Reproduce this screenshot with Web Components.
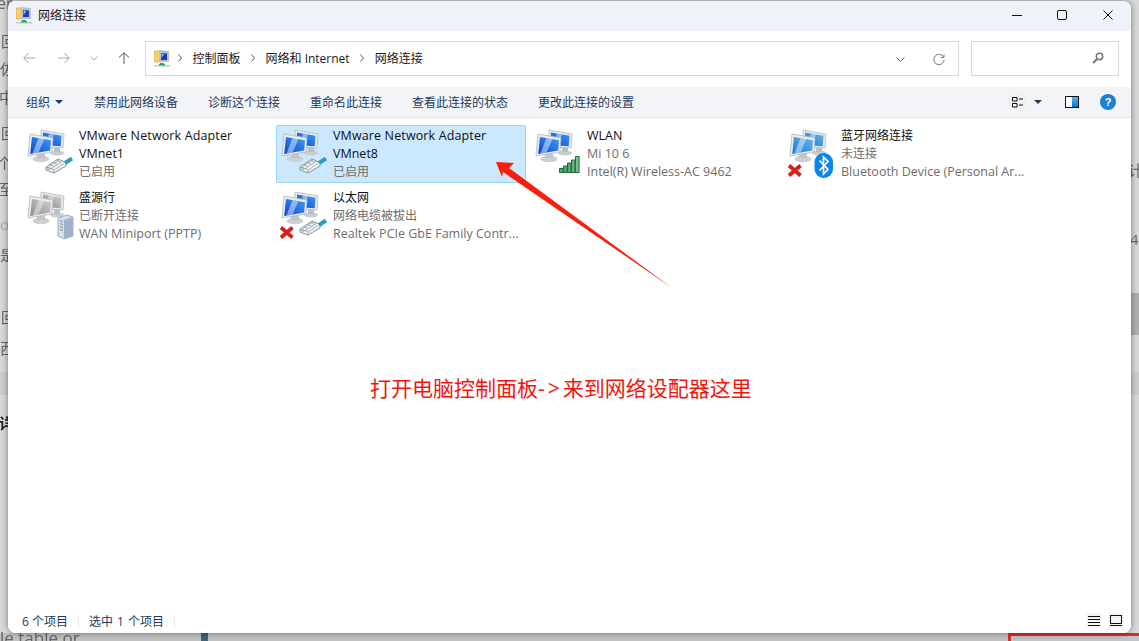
<!DOCTYPE html>
<html lang="zh">
<head>
<meta charset="utf-8">
<title>网络连接</title>
<style>
    html, body { margin: 0; height: 641px; overflow: hidden; }
    body {
        background: #d4d4d4;
        font-family: "Open Sans", "Noto Sans CJK SC", sans-serif;
        font-size: 12px;
    }
</style>
</head>
<body>
<desktop-bg>
    <span style="left:-3px;top:-8px;font-size:16px">er</span>
    <span style="left:1px;top:30px">回</span>
    <span style="left:0;top:58px">佐</span>
    <span style="left:-1px;top:86px">中</span>
    <span style="left:1px;top:122px">回</span>
    <span style="left:-3px;top:152px">个</span>
    <span style="left:-1px;top:178px">至</span>
    <span style="left:0;top:214px;color:#aaa">ol</span>
    <span style="left:0;top:244px">是</span>
    <span style="left:1px;top:306px">回</span>
    <span style="left:0;top:337px">西</span>
    <span style="left:-1px;top:412px;font-weight:700;color:#222">详</span>
    <span style="left:1128px;top:159px">计</span>
    <span style="left:1130px;top:229px">4</span>
    <span style="left:0;top:631px;font-size:17px;line-height:14px">le table or</span>
</desktop-bg>
<net-window>
    <title-bar slot="title">网络连接</title-bar>
    <nav-bar slot="nav"></nav-bar>
    <tool-bar slot="tools">
        <span>禁用此网络设备</span>
        <span>诊断这个连接</span>
        <span>重命名此连接</span>
        <span>查看此连接的状态</span>
        <span>更改此连接的设置</span>
    </tool-bar>
    <item-list slot="list">
        <net-item icon="blue" badge="plug" dark>
            <span slot="name" class="latin wide">VMware Network Adapter</span>
            <span slot="second" class="latin">VMnet1</span>
            <span slot="third">已启用</span>
        </net-item>
        <net-item icon="blue" badge="plug" dark selected>
            <span slot="name" class="latin wide">VMware Network Adapter</span>
            <span slot="second" class="latin">VMnet8</span>
            <span slot="third">已启用</span>
        </net-item>
        <net-item icon="blue" badge="wifi">
            <span slot="name" class="latin">WLAN</span>
            <span slot="second" class="latin">Mi 10 6</span>
            <span slot="third" class="latin">Intel(R) Wireless-AC 9462</span>
        </net-item>
        <net-item icon="pale" badge="bluetooth" cross>
            <span slot="name">蓝牙网络连接</span>
            <span slot="second">未连接</span>
            <span slot="third" class="latin">Bluetooth Device (Personal Ar...</span>
        </net-item>
        <net-item icon="grey" badge="server">
            <span slot="name">盛源行</span>
            <span slot="second">已断开连接</span>
            <span slot="third" class="latin">WAN Miniport (PPTP)</span>
        </net-item>
        <net-item icon="blue" badge="plug" cross>
            <span slot="name">以太网</span>
            <span slot="second">网络电缆被拔出</span>
            <span slot="third" class="latin">Realtek PCIe GbE Family Contr...</span>
        </net-item>
    </item-list>
    <status-bar slot="status"></status-bar>
    <red-note slot="note">打开电脑控制面板<span style="letter-spacing:3px">-&gt;</span>来到网络设配器这里</red-note>
</net-window>

<script>
const folderIcon = `
    <svg class="folder" width="16" height="17" viewBox="0 0 16 17">
        <path d="M0 1h7v11H0z" fill="#f2d16b" stroke="#c9a640" stroke-width=".6"/>
        <path d="M5 0l10 1v11H5z" fill="#b9c2cc"/>
        <path d="M7 3l6 .6v6.400H7z" fill="#1440b8"/>
        <path d="M7.600 3.600l2.600.3-2.600 4z" fill="#9cc2f0"/>
        <path d="M6 13h4v1.500H6z" fill="#1fae5a"/>
        <path d="M0 15h16v1.500H0z" fill="#c4cdc8"/>
        <path d="M5 14h6v1.500H5z" fill="#1fae5a"/>
    </svg>`;

// the two little monitors used by every adapter
function monitors(kind) {
    const colors = {
        blue: ['#0a46d2', '#3f9df2', '#ffffff'],
        pale: ['#1c78d4', '#66b8ee', '#ffffff'],
        grey: ['#8a8a8a', '#d2d2d2', '#f4f4f4']
    }[kind];
    const screen = (d, gloss) => `
        <path d="${d}" fill="url(#scr)"/>
        <path d="${gloss}" fill="${colors[2]}" opacity=".45"/>`;
    return `
        <defs>
            <linearGradient id="scr" x1="0" y1="1" x2="1" y2="0">
                <stop offset="0" stop-color="${colors[0]}"/>
                <stop offset="1" stop-color="${colors[1]}"/>
            </linearGradient>
        </defs>
        <ellipse cx="35" cy="28" rx="7" ry="2.600" fill="#c8cccd"/>
        <path d="M32 22h6v5h-6z" fill="#bcc0c3"/>
        <path d="M19 5l23 4-1 14-22-1z" fill="#e6e9eb" stroke="#b4bbc0" stroke-width=".8"/>
        ${screen('M21 7.500l18.500 3.200-.8 10.500L21 20z', 'M27 8.500l5 .9-3 10.400-5-.2z')}
        <ellipse cx="19" cy="34" rx="8.500" ry="3.300" fill="#cdd0d2"/>
        <path d="M15.500 27h7l1 6h-9z" fill="#c0c4c7"/>
        <path d="M8 9l23 4-1 14-24 4z" fill="#e9ebed" stroke="#b2b9be" stroke-width=".8"/>
        ${screen('M10 12l19 3.200-.8 10.300-20 3.400z', 'M16.500 13l6 1-6 13.400-6 1z')}`;
}

const badges = {
    plug: `
        <path d="M24 42l12-8 8 3.500v3.500l-12 7-8-3z" fill="#edf2f4" stroke="#7b8a91" stroke-width=".9"/>
        <path d="M27 41.500l10-6.500M30 43l10-6.500M33 44.500l9-6M28 39.500l4 2M31.500 37.500l4 2M35 35.500l4 2" stroke="#8e9ba1" stroke-width=".7"/>
        <path d="M25 43.500l3 1.300M26.500 42.500l3 1.300" stroke="#b89a45" stroke-width=".8"/>
        <path d="M43 38l7-4.500" stroke="#2f9cc4" stroke-width="4"/>
        <path d="M32 48v-3.500L24 42" fill="none" stroke="#7b8a91" stroke-width=".7"/>`,
    wifi: `
        <path d="M29.500 43.500h3.600v4h-3.600z" fill="#57a56e" stroke="#1f6b3a"/>
        <path d="M33.500 41h3.600v6.500h-3.600z" fill="#57a56e" stroke="#1f6b3a"/>
        <path d="M37.500 38h3.600v9.500h-3.600z" fill="#5aa872" stroke="#1f6b3a"/>
        <path d="M41.500 35h3.600v12.500h-3.600z" fill="#68b380" stroke="#1f6b3a"/>
        <path d="M45.500 31.500h3.600v16h-3.600z" fill="#79bd8f" stroke="#1f6b3a"/>`,
    bluetooth: `
        <rect x="30.500" y="28" width="18.500" height="25" rx="9" fill="#0b84ee"/>
        <path d="M35.500 35.500l8.500 9-4.500 4.500V32l4.500 4.500-8.500 9" fill="none" stroke="#fff" stroke-width="1.700"/>`,
    server: `
        <path d="M36 31l9-3 6 2v19l-9 3-6-3z" fill="#d3dfe9" stroke="#8ea2b4" stroke-width=".8"/>
        <path d="M42 33l9-3v19l-9 3z" fill="#9db4ca"/>
        <path d="M38 33.500l3 1M38 36.500l3 1M38 39.500l3 1M38 42.500l3 1" stroke="#7d92a7" stroke-width="1"/>`
};

const redCross = `<path d="M5 40.500l11.500 10M16.500 40.500L5 50.500" stroke="#d7201c" stroke-width="3.800"/>`;

class DesktopBg extends HTMLElement {
    constructor() {
        super();
        this.attachShadow({mode: 'open'});
        this.shadowRoot.innerHTML = `
        <style>
            :host {
                position: absolute;
                left: 0; top: 0; right: 0; bottom: 0;
                overflow: hidden;
                color: #666;
                font-size: 15px;
                filter: blur(.5px);
                background: linear-gradient(#d8d8d8 0, #d8d8d8 372px, #cdcdcd 372px, #cdcdcd 395px, #d8d8d8 395px);
            }
            ::slotted(span) { position: absolute; }
            .thumb { position: absolute; left: 1131px; top: 293px; width: 8px; height: 42px; background: #aeaeae; }
            .bottom { position: absolute; left: 0; right: 0; top: 633px; height: 8px; background: #c2c2c2; }
            .teal { position: absolute; left: 201px; top: 633px; width: 7px; height: 8px; background: #38677f; }
            .red { position: absolute; left: 1008px; top: 633px; width: 131px; height: 8px; box-sizing: border-box; border: solid #d62f2f; border-width: 3px 0 0 3px; background: #c4c4c4; }
        </style>
        <div class="thumb"></div>
        <div class="bottom"></div>
        <div class="teal"></div>
        <div class="red"></div>
        <slot></slot>`;
    }
}

class NetWindow extends HTMLElement {
    constructor() {
        super();
        this.attachShadow({mode: 'open'});
        this.shadowRoot.innerHTML = `
        <style>
            :host {
                position: absolute;
                left: 8px; top: 1px;
                width: 1123px; height: 632px;
                display: flex;
                flex-direction: column;
                background: #fff;
                border-radius: 8px;
                overflow: hidden;
                box-shadow: 0 0 6px rgba(0,0,0,.45);
            }
            .arrow { position: absolute; left: -8px; top: -1px; pointer-events: none; }
        </style>
        <slot name="title"></slot>
        <slot name="nav"></slot>
        <slot name="tools"></slot>
        <slot name="list"></slot>
        <slot name="status"></slot>
        <svg class="arrow" width="1139" height="641">
            <path d="M496 162l18 1-5 5 163 120-169-116-1 5z" fill="#fb1c0e"/>
        </svg>
        <slot name="note"></slot>`;
    }
}

class TitleBar extends HTMLElement {
    constructor() {
        super();
        this.attachShadow({mode: 'open'});
        this.shadowRoot.innerHTML = `
        <style>
            :host {
                flex: none;
                height: 30px;
                box-sizing: border-box;
                display: flex;
                align-items: center;
                padding: 0 0 2px 8px;
                gap: 6px;
                background: #eff2f8;
                color: #1a1a1a;
            }
            .controls { margin-left: auto; display: flex; gap: 35px; padding-right: 18px; align-items: center; }
            .controls svg:last-child { margin-left: 1px; }
        </style>
        ${folderIcon}
        <span><slot></slot></span>
        <div class="controls">
            <svg width="10" height="10" viewBox="0 0 10 10"><path d="M0 5.500h10" stroke="#111"/></svg>
            <svg width="10" height="10" viewBox="0 0 10 10"><rect x=".5" y=".5" width="9" height="9" rx="1.500" fill="none" stroke="#111"/></svg>
            <svg width="10" height="10" viewBox="0 0 10 10"><path d="M.5.500l9 9M9.500.500l-9 9" stroke="#111"/></svg>
        </div>`;
    }
}

class NavBar extends HTMLElement {
    constructor() {
        super();
        this.attachShadow({mode: 'open'});
        const sep = `<svg width="4" height="8" viewBox="0 0 4 8"><path d="M.5.500L3.500 4 .5 7.500" fill="none" stroke="#555"/></svg>`;
        this.shadowRoot.innerHTML = `
        <style>
            :host {
                flex: none;
                height: 56px;
                box-sizing: border-box;
                display: flex;
                align-items: center;
                padding: 0 12px 2px 15px;
                background: #fff;
            }
            .nav { flex: none; }
            .address, .search {
                flex: none;
                height: 35px;
                box-sizing: border-box;
                border: 1px solid #d9d9d9;
                display: flex;
                align-items: center;
                background: #fff;
            }
            .address { width: 814px; margin-left: 15px; padding: 0 13px 0 8px; gap: 10.500px; color: #1a1a1a; }
            .folder { margin-right: -2.500px; }
            .search { width: 148px; margin-left: 12px; justify-content: flex-end; padding-right: 14px; }
            .end { margin-left: auto; display: flex; align-items: center; gap: 28px; padding-top: 3px; }
        </style>
        <svg class="nav" style="margin-right:23px" width="12" height="12" viewBox="0 0 12 12"><path d="M12 6H.8M5.500 1L.8 6l4.700 5" fill="none" stroke="#a6a6a6"/></svg>
        <svg class="nav" style="margin-right:20px" width="12" height="12" viewBox="0 0 12 12"><path d="M0 6h11.200M6.500 1l4.700 5-4.700 5" fill="none" stroke="#a6a6a6"/></svg>
        <svg class="nav" style="margin-right:20px" width="8" height="5" viewBox="0 0 8 5"><path d="M.5.500L4 4 7.500.500" fill="none" stroke="#a6a6a6"/></svg>
        <svg class="nav" width="12" height="12" viewBox="0 0 12 12"><path d="M6 12V.8M1 5.500L6 .8l5 4.700" fill="none" stroke="#555"/></svg>
        <div class="address">
            ${folderIcon}
            ${sep}<span>控制面板</span>
            ${sep}<span>网络和 Internet</span>
            ${sep}<span>网络连接</span>
            <div class="end">
                <svg width="9" height="5" viewBox="0 0 9 5"><path d="M.5.500l4 4 4-4" fill="none" stroke="#666"/></svg>
                <svg width="12" height="12" viewBox="0 0 12 12"><path d="M10.500 2.800A5.200 5.200 0 1 0 11.200 6M11 .5v3H8" fill="none" stroke="#777"/></svg>
            </div>
        </div>
        <div class="search">
            <svg width="12" height="12" viewBox="0 0 12 12"><circle cx="7.500" cy="4.500" r="3.200" fill="none" stroke="#777" stroke-width="1.500"/><path d="M5 7L1 11" stroke="#777" stroke-width="2"/></svg>
        </div>`;
    }
}

class ToolBar extends HTMLElement {
    constructor() {
        super();
        this.attachShadow({mode: 'open'});
        this.shadowRoot.innerHTML = `
        <style>
            :host {
                flex: none;
                height: 31px;
                box-sizing: border-box;
                display: flex;
                align-items: center;
                padding: 0 15px 0 18px;
                background: #f3f4f8;
                border-bottom: 1px solid #e6e6e6;
                color: #1e3a5c;
            }
            .org { display: flex; align-items: center; gap: 5px; margin-right: 31px; }
            .tri { width: 0; height: 0; border: 4px solid transparent; border-top: 4px solid #1e3a5c; border-bottom: 0; }
            .cmds { display: flex; gap: 30px; }
            .right { margin-left: auto; display: flex; align-items: center; }
            .views { width: 16px; height: 14px; background: #eeeff2; display: block; margin-right: 9px; }
            .pane { margin: 0 21px 0 23px; }
            .help { width: 16px; height: 16px; border-radius: 50%; background: #1b80d6; color: #fff; font: 700 11px/16px "Liberation Sans", sans-serif; text-align: center; }
        </style>
        <div class="org"><span>组织</span><div class="tri"></div></div>
        <div class="cmds"><slot></slot></div>
        <div class="right">
            <svg class="views" viewBox="0 0 16 14"><path d="M3.500 2.500h4.500v3.500H3.500zM3.500 8.500h4.500V12H3.500zM3.500 2.500" fill="none" stroke="#111"/><path d="M10 4h4M10 10h4" stroke="#111"/></svg>
            <div class="tri" style="border-width:4px"></div>
            <svg class="pane" width="14" height="12" viewBox="0 0 14 12"><defs><linearGradient id="p" x1="0" y1="0" x2="0" y2="1"><stop offset="0" stop-color="#58b4ee"/><stop offset="1" stop-color="#0e74cc"/></linearGradient></defs><rect x=".5" y=".5" width="13" height="11" fill="#fff" stroke="#111"/><rect x="7" y="1" width="6" height="10" fill="url(#p)"/></svg>
            <div class="help">?</div>
        </div>`;
    }
}

class ItemList extends HTMLElement {
    constructor() {
        super();
        this.attachShadow({mode: 'open'});
        this.shadowRoot.innerHTML = `
        <style>
            :host {
                flex: 1;
                display: grid;
                grid-template-columns: repeat(4, 250px);
                grid-auto-rows: 58px;
                gap: 4px;
                align-content: start;
                padding: 7px 0 0 14px;
                background: #fff;
            }
        </style>
        <slot></slot>`;
    }
}

class NetItem extends HTMLElement {
    constructor() {
        super();
        this.attachShadow({mode: 'open'});
    }
    connectedCallback() {
        const kind = this.getAttribute('icon');
        const badge = this.getAttribute('badge');
        const cross = this.hasAttribute('cross') ? redCross : '';
        this.shadowRoot.innerHTML = `
        <style>
            :host {
                display: flex;
                box-sizing: border-box;
                border: 1px solid transparent;
                border-radius: 2px;
                line-height: 18px;
                white-space: nowrap;
            }
            :host([selected]) { background: #cce8ff; border-color: #99d1ff; }
            svg { flex: none; margin: -1px 0 0 -1px; }
            .text { display: flex; flex-direction: column; margin: 0 0 0 3px; padding-top: 1px; }
            .name { color: #111; }
            .sub { color: #6d6d6d; }
            :host([dark]) .second { color: #111; }
            ::slotted(.latin) { font-size: 12.500px; }
            ::slotted(.wide) { letter-spacing: .13px; }
        </style>
        <svg width="54" height="56" viewBox="0 0 54 56">${monitors(kind)}${badges[badge]}${cross}</svg>
        <div class="text">
            <div class="name"><slot name="name"></slot></div>
            <div class="sub second"><slot name="second"></slot></div>
            <div class="sub"><slot name="third"></slot></div>
        </div>`;
    }
}

class StatusBar extends HTMLElement {
    constructor() {
        super();
        this.attachShadow({mode: 'open'});
        this.shadowRoot.innerHTML = `
        <style>
            :host {
                flex: none;
                height: 24px;
                box-sizing: border-box;
                display: flex;
                align-items: center;
                padding: 1px 7px 0 14px;
                color: #1e3a5c;
                background: #fff;
            }
            .cell { padding-right: 10px; margin-right: 10px; border-right: 1px solid #ececec; line-height: 14px; }
            .cell:first-child { padding-right: 11px; }
            .cell + .cell { word-spacing: 1px; }
            .right { margin: -2px 0 0 auto; display: flex; gap: 6px; }
            .btn { width: 16px; height: 15px; background: #f5f5f5; display: block; }
        </style>
        <div class="cell">6 个项目</div>
        <div class="cell">选中 1 个项目</div>
        <div class="right">
            <svg class="btn" viewBox="0 0 16 15"><path d="M2 3.500h12M2 6.500h12M2 9.500h12M2 12.500h12" stroke="#111"/></svg>
            <svg class="btn" viewBox="0 0 16 15"><rect x="2.500" y="2.500" width="11" height="8" fill="none" stroke="#111"/><path d="M2 12.500h12" stroke="#111"/></svg>
        </div>`;
    }
}

class RedNote extends HTMLElement {
    constructor() {
        super();
        this.attachShadow({mode: 'open'});
        this.shadowRoot.innerHTML = `
        <style>
            :host {
                position: absolute;
                left: 362px; top: 372px;
                color: #f5140c;
                font-size: 21px;
                line-height: 30px;
                white-space: nowrap;
            }
        </style>
        <slot></slot>`;
    }
}

customElements.define('desktop-bg', DesktopBg);
customElements.define('net-window', NetWindow);
customElements.define('title-bar', TitleBar);
customElements.define('nav-bar', NavBar);
customElements.define('tool-bar', ToolBar);
customElements.define('item-list', ItemList);
customElements.define('net-item', NetItem);
customElements.define('status-bar', StatusBar);
customElements.define('red-note', RedNote);
</script>
</body>
</html>
